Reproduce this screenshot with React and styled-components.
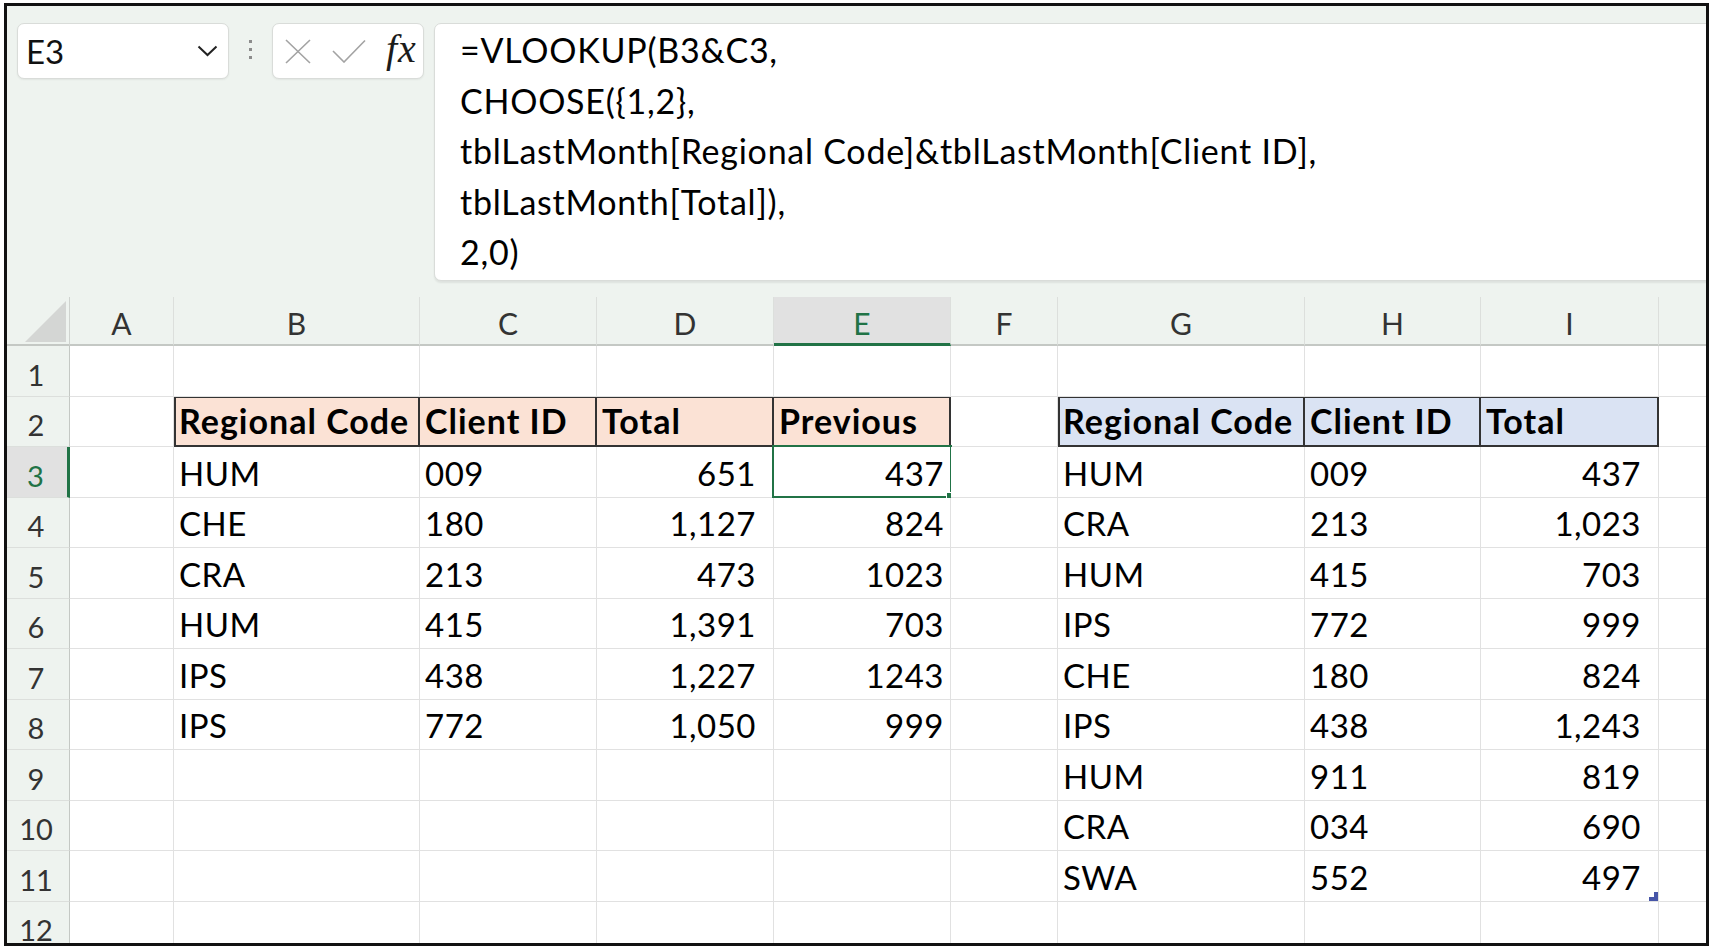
import React from 'react';
import styled, { createGlobalStyle } from 'styled-components';

const GlobalStyle = createGlobalStyle`
    html, body {
        margin: 0;
        padding: 0;
        background: #fff;
    }
    body {
        font-family: Lato, "Open Sans", "Liberation Sans", sans-serif;
        color: #000;
    }
`;

const GREEN = '#217346';
const CHROME = '#eef3ef';
const GRID = '#e1e1e1';

const Frame = styled.div`
    box-sizing: border-box;
    width: 1705px;
    height: 943px;
    margin: 3px 0 0 4px;
    border: 3px solid #111;
    background: ${CHROME};
    overflow: hidden;
    display: flex;
    flex-direction: column;
`;

const FormulaBar = styled.div`
    display: flex;
    align-items: flex-start;
    padding: 17px 0 0 10px;
    margin-bottom: 16px;
    flex-shrink: 0;
`;

const Pill = styled.div`
    box-sizing: border-box;
    height: 56px;
    background: #fff;
    border: 1px solid #d9dcd9;
    border-radius: 7px;
    box-shadow: 0 1px 2px rgba(0, 0, 0, 0.06);
    display: flex;
    align-items: center;
`;

const NameBox = styled(Pill)`
    width: 212px;
    padding: 0 10px 0 8px;
    justify-content: space-between;
    font-size: 33px;
    line-height: 1;
    color: #111;
`;

const Dots = styled.div`
    display: flex;
    flex-direction: column;
    gap: 5px;
    margin: 17px 20px 0 20px;

    span {
        width: 3px;
        height: 3px;
        background: #8c8c8c;
    }
`;

const FxBox = styled(Pill)`
    width: 152px;
    padding: 0 0 0 12px;
`;

const IconSlot = styled.div`
    display: flex;
    align-items: center;
    margin-right: ${(p) => p.$gap}px;
`;

const Fx = styled.span`
    font-family: "Liberation Serif", "DejaVu Serif", serif;
    font-style: italic;
    font-size: 40px;
    line-height: 1;
    color: #1b1b1b;
    letter-spacing: 1px;
    margin-top: -5px;
`;

const FormulaBox = styled.div`
    box-sizing: border-box;
    flex: 1;
    height: 258px;
    margin: 0 -14px 0 10px;
    background: #fff;
    border: 1px solid #d9dcd9;
    border-radius: 7px;
    box-shadow: 0 2px 2px rgba(0, 0, 0, 0.07);
    padding: 0 0 0 25px;
    overflow: hidden;
`;

const FormulaText = styled.div`
    margin-top: 1px;
    font-size: 34px;
    letter-spacing: 0.75px;
    line-height: 50.6px;
    color: #000;
    white-space: pre;
`;

const Sheet = styled.div`
    display: grid;
    grid-template-columns: 63px 104px 246px 177px 177px 177px 107px 247px 176px 178px 60px;
    grid-template-rows: 49px;
    grid-auto-rows: 50.5px;
`;

const Corner = styled.div`
    box-sizing: border-box;
    background: ${CHROME};
    border-right: 1px solid #cfd3cf;
    border-bottom: 2px solid #c4c8c4;
    display: flex;
    align-items: flex-end;
    justify-content: flex-end;
    padding: 0 3px 2px 0;
`;

const ColHead = styled.div`
    box-sizing: border-box;
    background: ${(p) => (p.$active ? '#e1e1e1' : CHROME)};
    border-right: 1px solid #dcdfdc;
    border-bottom: ${(p) => (p.$active ? `3px solid ${GREEN}` : '2px solid #c4c8c4')};
    color: ${(p) => (p.$active ? GREEN : '#333')};
    font-size: 30px;
    line-height: 1;
    display: flex;
    align-items: flex-end;
    justify-content: center;
    padding-bottom: ${(p) => (p.$active ? 5 : 6)}px;
`;

const RowHead = styled.div`
    box-sizing: border-box;
    background: ${(p) => (p.$active ? '#e1e1e1' : CHROME)};
    border-right: ${(p) => (p.$active ? `3px solid ${GREEN}` : '1px solid #c4c8c4')};
    border-bottom: 1px solid #dcdfdc;
    color: ${(p) => (p.$active ? GREEN : '#333')};
    font-size: 29px;
    line-height: 1;
    display: flex;
    align-items: flex-end;
    justify-content: center;
    padding: 0 ${(p) => (p.$active ? 3 : 4)}px 7px 0;
`;

const Cell = styled.div`
    box-sizing: border-box;
    position: relative;
    background: ${(p) => p.$bg || '#fff'};
    border-right: ${(p) => (p.$head ? '2px solid #333' : `1px solid ${GRID}`)};
    border-bottom: ${(p) => (p.$head ? '2px solid #333' : `1px solid ${GRID}`)};
    border-top: ${(p) => (p.$head ? '1px solid #333' : 'none')};
    border-left: ${(p) => (p.$first ? '2px solid #333' : 'none')};
    font-size: ${(p) => (p.$head ? 34 : 33)}px;
    letter-spacing: ${(p) => (p.$head ? 1 : 0.5)}px;
    line-height: 1;
    font-weight: ${(p) => (p.$head ? 700 : 400)};
    display: flex;
    align-items: flex-end;
    justify-content: ${(p) => (p.$right ? 'flex-end' : 'flex-start')};
    padding: 0 ${(p) => p.$padR}px 7px ${(p) => (p.$first ? 3 : 5)}px;
    white-space: nowrap;
`;

const Selection = styled.div`
    position: absolute;
    top: -2px;
    left: -2px;
    right: -2px;
    bottom: -1px;
    border: 2.5px solid ${GREEN};
    pointer-events: none;
`;

const FillHandle = styled.div`
    position: absolute;
    right: -5px;
    bottom: -5px;
    width: 7px;
    height: 7px;
    background: ${GREEN};
    border: 1px solid #fff;
`;

const ResizeMark = styled.svg`
    position: absolute;
    right: 0;
    bottom: 0;
`;

const COLS = ['A', 'B', 'C', 'D', 'E', 'F', 'G', 'H', 'I', ''];

const PEACH = '#fbe2d5';
const BLUE = '#dae3f3';

const left = [
    ['HUM', '009', '651', '437'],
    ['CHE', '180', '1,127', '824'],
    ['CRA', '213', '473', '1023'],
    ['HUM', '415', '1,391', '703'],
    ['IPS', '438', '1,227', '1243'],
    ['IPS', '772', '1,050', '999'],
];

const right = [
    ['HUM', '009', '437'],
    ['CRA', '213', '1,023'],
    ['HUM', '415', '703'],
    ['IPS', '772', '999'],
    ['CHE', '180', '824'],
    ['IPS', '438', '1,243'],
    ['HUM', '911', '819'],
    ['CRA', '034', '690'],
    ['SWA', '552', '497'],
];

// builds the content of one sheet row, one entry per column A..J
function rowCells(r) {
    const cells = Array.from({ length: 10 }, () => ({ text: '' }));
    if (r === 2) {
        ['Regional Code', 'Client ID', 'Total', 'Previous'].forEach((t, i) => {
            cells[1 + i] = { text: t, head: true, bg: PEACH, first: i === 0 };
        });
        ['Regional Code', 'Client ID', 'Total'].forEach((t, i) => {
            cells[6 + i] = { text: t, head: true, bg: BLUE, first: i === 0 };
        });
    }
    const l = left[r - 3];
    if (l) {
        cells[1] = { text: l[0] };
        cells[2] = { text: l[1] };
        cells[3] = { text: l[2], right: true, padR: 17 };
        cells[4] = { text: l[3], right: true, padR: 6, selected: r === 3 };
    }
    const g = right[r - 3];
    if (g) {
        cells[6] = { text: g[0] };
        cells[7] = { text: g[1] };
        cells[8] = { text: g[2], right: true, padR: 17, mark: r === 11 };
    }
    return cells;
}

const Chevron = () => (
    <svg width="21" height="12" viewBox="0 0 21 12">
        <polyline points="1.5,1.5 10.5,10 19.5,1.5" fill="none" stroke="#222" strokeWidth="2" />
    </svg>
);

const Cross = () => (
    <svg width="26" height="25" viewBox="0 0 26 25">
        <path d="M1 1 L25 24 M25 1 L1 24" stroke="#a3a3a3" strokeWidth="1.6" fill="none" />
    </svg>
);

const Check = () => (
    <svg width="34" height="24" viewBox="0 0 34 24">
        <polyline points="1,12 12,23 33,1.5" fill="none" stroke="#a3a3a3" strokeWidth="1.6" />
    </svg>
);

const formula = `=VLOOKUP(B3&C3,
CHOOSE({1,2},
tblLastMonth[Regional Code]&tblLastMonth[Client ID],
tblLastMonth[Total]),
2,0)`;

const App = () => {
    const rows = Array.from({ length: 12 }, (_, i) => i + 1);

    return (
        <>
            <GlobalStyle />
            <Frame>
                <FormulaBar>
                    <NameBox>
                        <span>E3</span>
                        <Chevron />
                    </NameBox>
                    <Dots>
                        <span />
                        <span />
                        <span />
                    </Dots>
                    <FxBox>
                        <IconSlot $gap={21}>
                            <Cross />
                        </IconSlot>
                        <IconSlot $gap={20}>
                            <Check />
                        </IconSlot>
                        <Fx>fx</Fx>
                    </FxBox>
                    <FormulaBox>
                        <FormulaText>{formula}</FormulaText>
                    </FormulaBox>
                </FormulaBar>

                <Sheet>
                    <Corner>
                        <svg width="41" height="41" viewBox="0 0 41 41">
                            <polygon points="41,0 41,41 0,41" fill="#d4d6d4" />
                        </svg>
                    </Corner>
                    {COLS.map((c, i) => (
                        <ColHead key={i} $active={c === 'E'}>{c}</ColHead>
                    ))}

                    {rows.map((r) => (
                        <React.Fragment key={r}>
                            <RowHead $active={r === 3}>{r}</RowHead>
                            {rowCells(r).map((c, i) => (
                                <Cell
                                    key={i}
                                    $bg={c.bg}
                                    $head={c.head}
                                    $first={c.first}
                                    $right={c.right}
                                    $padR={c.padR ?? 9}
                                >
                                    {c.text}
                                    {c.selected && (
                                        <Selection>
                                            <FillHandle />
                                        </Selection>
                                    )}
                                    {c.mark && (
                                        <ResizeMark width="9" height="9" viewBox="0 0 9 9">
                                            <polygon points="9,0 9,9 0,9 0,5 5,5 5,0" fill="#4756a8" />
                                        </ResizeMark>
                                    )}
                                </Cell>
                            ))}
                        </React.Fragment>
                    ))}
                </Sheet>
            </Frame>
        </>
    );
};

export default App;
